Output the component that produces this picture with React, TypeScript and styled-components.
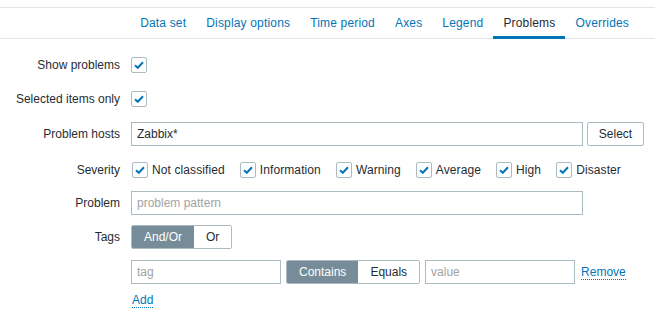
import { ReactElement, ReactNode } from "react";
import styled, { createGlobalStyle } from "styled-components";

const GlobalStyle = createGlobalStyle`
  body {
    margin: 0;
    background: #fff;
    font-family: "Liberation Sans", Arial, sans-serif;
    font-size: 12px;
    color: #1f2c33;
  }
`;

const tabs = [
  "Data set",
  "Display options",
  "Time period",
  "Axes",
  "Legend",
  "Problems",
  "Overrides",
];

const severities = [
  "Not classified",
  "Information",
  "Warning",
  "Average",
  "High",
  "Disaster",
];

const Check = (): ReactElement => (
  <CheckBox>
    <svg width="10" height="8" viewBox="0 0 10 8">
      <path
        d="M1 4.2 L3.8 6.8 L9 1.2"
        fill="none"
        stroke="#0275b8"
        strokeWidth="2"
      />
    </svg>
  </CheckBox>
);

const FormRow = ({
  label,
  gap,
  children,
}: {
  label?: string;
  gap: number;
  children: ReactNode;
}): ReactElement => (
  <Row $gap={gap}>
    <Label>{label}</Label>
    <Field>{children}</Field>
  </Row>
);

export default function App(): ReactElement {
  return (
    <Page>
      <GlobalStyle />
      <TabBar>
        {tabs.map((t) => (
          <Tab key={t} $active={t === "Problems"}>
            {t}
          </Tab>
        ))}
      </TabBar>
      <Form>
        <FormRow label="Show problems" gap={14}>
          <Check />
        </FormRow>

        <FormRow label="Selected items only" gap={10}>
          <Check />
        </FormRow>

        <FormRow label="Problem hosts" gap={11}>
          <TextInput $width={452} defaultValue="Zabbix*" />
          <Button>Select</Button>
        </FormRow>

        <FormRow label="Severity" gap={12}>
          <SeverityList>
            {severities.map((s) => (
              <SeverityItem key={s}>
                <Check />
                {s}
              </SeverityItem>
            ))}
          </SeverityList>
        </FormRow>

        <FormRow label="Problem" gap={9}>
          <TextInput $width={452} placeholder="problem pattern" />
        </FormRow>

        <FormRow label="Tags" gap={10}>
          <Segmented>
            <Segment $on>And/Or</Segment>
            <Segment>Or</Segment>
          </Segmented>
        </FormRow>

        <FormRow gap={11}>
          <TextInput $width={150} placeholder="tag" />
          <Segmented>
            <Segment $on>Contains</Segment>
            <Segment>Equals</Segment>
          </Segmented>
          <TextInput $width={150} placeholder="value" />
          <Link>Remove</Link>
        </FormRow>

        <AddRow>
          <Link>Add</Link>
        </AddRow>
      </Form>
    </Page>
  );
}

const Page = styled.div`
  width: 655px;
  height: 319px;
  padding-top: 7px;
  box-sizing: border-box;
  overflow: hidden;
`;

const TabBar = styled.div`
  display: flex;
  justify-content: flex-end;
  height: 30px;
  padding-right: 16px;
  border-top: 1px solid #e3e6e8;
  border-bottom: 1px solid #e3e6e8;
`;

const Tab = styled.div<{ $active?: boolean }>`
  display: flex;
  align-items: center;
  padding: 2px 10px 0;
  height: 31px;
  box-sizing: border-box;
  letter-spacing: 0.17px;
  color: ${(p) => (p.$active ? "#1f2c33" : "#0275b8")};
  border-bottom: 3px solid ${(p) => (p.$active ? "#0275b8" : "transparent")};
`;

const Form = styled.div`
  display: flex;
  flex-direction: column;
`;

const Row = styled.div<{ $gap: number }>`
  display: grid;
  grid-template-columns: 120px 1fr;
  column-gap: 11px;
  margin-top: ${(p) => p.$gap}px;
`;

const Label = styled.div`
  display: flex;
  align-items: center;
  justify-content: flex-end;
  height: 24px;
`;

const Field = styled.div`
  display: flex;
  align-items: center;
  gap: 5px;
  min-height: 24px;
`;

const AddRow = styled.div`
  display: flex;
  align-items: center;
  height: 16px;
  margin-top: 8px;
  padding-left: 131px;
`;

const CheckBox = styled.span`
  display: inline-flex;
  align-items: center;
  justify-content: center;
  width: 16px;
  height: 16px;
  box-sizing: border-box;
  border: 1px solid #acbbc2;
  border-radius: 2px;
  background: #fff;
  flex: none;
`;

const SeverityList = styled.div`
  display: flex;
  align-items: center;
  gap: 15px;
  letter-spacing: 0.1px;
  margin-left: 1px;
`;

const SeverityItem = styled.label`
  display: flex;
  align-items: center;
  gap: 4px;
`;

const TextInput = styled.input<{ $width: number }>`
  width: ${(p) => p.$width}px;
  height: 24px;
  box-sizing: border-box;
  border: 1px solid #acbbc2;
  padding: 0 5px;
  font-family: inherit;
  font-size: 12px;
  color: #1f2c33;
  background: #fff;
  outline: none;
  &::placeholder {
    color: #a3a3a3;
  }
`;

const Button = styled.button`
  height: 24px;
  width: 57px;
  box-sizing: border-box;
  border: 1px solid #acbbc2;
  border-radius: 2px;
  background: #fff;
  font-family: inherit;
  font-size: 12px;
  color: #1f2c33;
  margin-left: -1px;
`;

const Segmented = styled.div`
  display: flex;
  height: 24px;
  box-sizing: border-box;
  border: 1px solid #acbbc2;
  border-radius: 2px;
  overflow: hidden;
`;

const Segment = styled.div<{ $on?: boolean }>`
  display: flex;
  align-items: center;
  padding: 0 12px;
  background: ${(p) => (p.$on ? "#768d99" : "#fff")};
  color: ${(p) => (p.$on ? "#fff" : "#1f2c33")};
`;

const Link = styled.span`
  color: #0275b8;
  border-bottom: 1px dotted #0275b8;
  line-height: 14px;
  margin-left: 1px;
`;
